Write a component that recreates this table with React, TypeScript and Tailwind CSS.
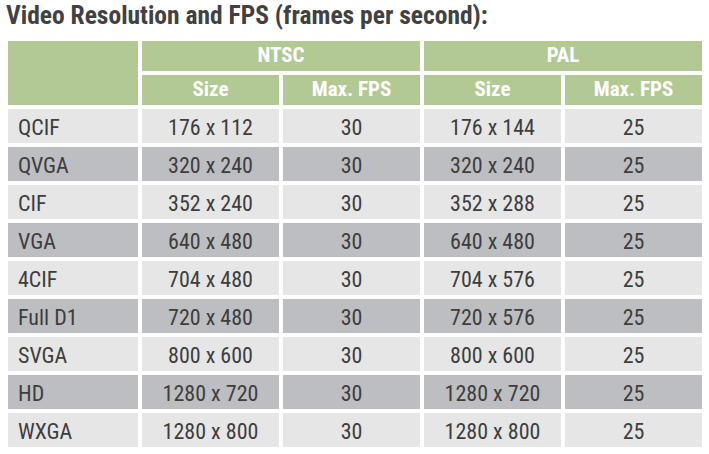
// Video resolution / FPS table
const rows: [string, string, string, string, string][] = [
  ["QCIF", "176 x 112", "30", "176 x 144", "25"],
  ["QVGA", "320 x 240", "30", "320 x 240", "25"],
  ["CIF", "352 x 240", "30", "352 x 288", "25"],
  ["VGA", "640 x 480", "30", "640 x 480", "25"],
  ["4CIF", "704 x 480", "30", "704 x 576", "25"],
  ["Full D1", "720 x 480", "30", "720 x 576", "25"],
  ["SVGA", "800 x 600", "30", "800 x 600", "25"],
  ["HD", "1280 x 720", "30", "1280 x 720", "25"],
  ["WXGA", "1280 x 800", "30", "1280 x 800", "25"],
];

const font = "font-['Roboto_Condensed',Roboto,sans-serif] [font-stretch:75%]";

export default function App() {
  return (
    <div className={`w-[709px] h-[454px] bg-white pl-[8px] ${font}`}>
      <h1 className="text-[25.5px] leading-[30px] font-bold text-[#414141] -ml-[2px]">
        Video Resolution and FPS (frames per second):
      </h1>

      <div className="mt-[11px] grid grid-cols-[130px_137px_137px_137px_137px] grid-rows-[30px_30px] auto-rows-[34px] gap-[4px]">
        <div className="row-span-2 bg-[#b2c994]" />
        <HeadCell className="col-span-2">NTSC</HeadCell>
        <HeadCell className="col-span-2">PAL</HeadCell>
        <HeadCell>Size</HeadCell>
        <HeadCell>Max. FPS</HeadCell>
        <HeadCell>Size</HeadCell>
        <HeadCell>Max. FPS</HeadCell>

        {rows.map((r, i) => {
          const bg = i % 2 === 0 ? "bg-[#e6e6e6]" : "bg-[#bdbec1]";
          return r.map((cell, j) => (
            <div
              key={`${i}-${j}`}
              className={`${bg} flex items-center pt-[2px] text-[22px] text-[#3d3d3d] ${
                j === 0 ? "pl-[10px]" : "justify-center"
              }`}
            >
              {cell}
            </div>
          ));
        })}
      </div>
    </div>
  );
}

function HeadCell({
  children,
  className = "",
}: {
  children: React.ReactNode;
  className?: string;
}) {
  return (
    <div
      className={`bg-[#b2c994] flex items-center justify-center text-white font-bold text-[21px] ${className}`}
    >
      {children}
    </div>
  );
}
